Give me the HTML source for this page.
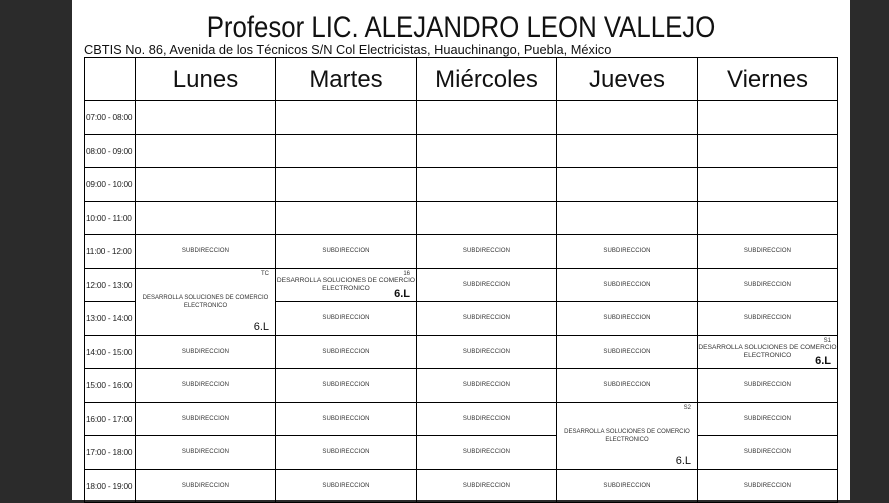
<!DOCTYPE html>
<html><head><meta charset="utf-8"><style>
body{margin:0;width:889px;height:500px;overflow:hidden;background:#2b2b2b;font-family:"Liberation Sans",Arial,sans-serif}
.page{position:absolute;left:72px;top:0;width:778px;height:500px;background:#fff}
.t{position:absolute;left:72px;width:778px;top:11px;text-align:center;font-size:30px;color:#111;transform:scaleX(0.86);white-space:nowrap}
.s{position:absolute;left:84px;top:42px;font-size:12.8px;color:#111;white-space:nowrap}
.g{position:absolute;left:84px;top:57px;display:grid;grid-template-columns:51px 140px 141px 140px 141px 140px;grid-template-rows:43px repeat(12,33.5px);border-left:1.5px solid #000;border-top:1.5px solid #000}
.g>div{border-right:1.5px solid #000;border-bottom:1.5px solid #000;position:relative;box-sizing:border-box;display:flex;align-items:center;justify-content:center;text-align:center}
.h{font-size:24px;color:#111;padding-top:2px}
.tm{font-size:8.3px;color:#222;justify-content:flex-start!important;padding-left:1px;white-space:nowrap;letter-spacing:-0.2px}
.sb{font-size:6px;color:#333;letter-spacing:.1px}
.d{display:block!important}
.d .n{position:absolute;right:6px;top:2px;font-size:6px;color:#333}
.d .x{position:absolute;left:-10px;right:-10px;font-size:6.6px;color:#333;line-height:8px;white-space:nowrap}
.d .l{position:absolute;right:6px;font-size:11px;color:#111;font-weight:bold}
</style></head><body>
<div class="page"></div>
<div class="t">Profesor LIC. ALEJANDRO LEON VALLEJO</div>
<div class="s">CBTIS No. 86, Avenida de los Técnicos S/N Col Electricistas, Huauchinango, Puebla, México</div>
<div class="g">
<div></div><div class="h">Lunes</div><div class="h">Martes</div><div class="h">Miércoles</div><div class="h">Jueves</div><div class="h">Viernes</div>
<div class="tm">07:00 - 08:00</div><div></div><div></div><div></div><div></div><div></div>
<div class="tm">08:00 - 09:00</div><div></div><div></div><div></div><div></div><div></div>
<div class="tm">09:00 - 10:00</div><div></div><div></div><div></div><div></div><div></div>
<div class="tm">10:00 - 11:00</div><div></div><div></div><div></div><div></div><div></div>
<div class="tm">11:00 - 12:00</div><div class="sb">SUBDIRECCION</div><div class="sb">SUBDIRECCION</div><div class="sb">SUBDIRECCION</div><div class="sb">SUBDIRECCION</div><div class="sb">SUBDIRECCION</div>
<div class="tm">12:00 - 13:00</div>
<div class="d" style="grid-row:span 2"><span class="n">TC</span><span class="x" style="top:25px;font-size:6px">DESARROLLA SOLUCIONES DE COMERCIO<br>ELECTRONICO</span><span class="l" style="bottom:2px;font-weight:normal">6.L</span></div>
<div class="d"><span class="n">16</span><span class="x" style="top:8px">DESARROLLA SOLUCIONES DE COMERCIO<br>ELECTRONICO</span><span class="l" style="bottom:1px">6.L</span></div>
<div class="sb">SUBDIRECCION</div><div class="sb">SUBDIRECCION</div><div class="sb">SUBDIRECCION</div>
<div class="tm">13:00 - 14:00</div><div class="sb">SUBDIRECCION</div><div class="sb">SUBDIRECCION</div><div class="sb">SUBDIRECCION</div><div class="sb">SUBDIRECCION</div>
<div class="tm">14:00 - 15:00</div><div class="sb">SUBDIRECCION</div><div class="sb">SUBDIRECCION</div><div class="sb">SUBDIRECCION</div><div class="sb">SUBDIRECCION</div>
<div class="d"><span class="n">S1</span><span class="x" style="top:8px">DESARROLLA SOLUCIONES DE COMERCIO<br>ELECTRONICO</span><span class="l" style="bottom:1px">6.L</span></div>
<div class="tm">15:00 - 16:00</div><div class="sb">SUBDIRECCION</div><div class="sb">SUBDIRECCION</div><div class="sb">SUBDIRECCION</div><div class="sb">SUBDIRECCION</div><div class="sb">SUBDIRECCION</div>
<div class="tm">16:00 - 17:00</div><div class="sb">SUBDIRECCION</div><div class="sb">SUBDIRECCION</div><div class="sb">SUBDIRECCION</div>
<div class="d" style="grid-row:span 2"><span class="n">S2</span><span class="x" style="top:25px;font-size:6px">DESARROLLA SOLUCIONES DE COMERCIO<br>ELECTRONICO</span><span class="l" style="bottom:2px;font-weight:normal">6.L</span></div>
<div class="sb">SUBDIRECCION</div>
<div class="tm">17:00 - 18:00</div><div class="sb">SUBDIRECCION</div><div class="sb">SUBDIRECCION</div><div class="sb">SUBDIRECCION</div><div class="sb">SUBDIRECCION</div>
<div class="tm">18:00 - 19:00</div><div class="sb">SUBDIRECCION</div><div class="sb">SUBDIRECCION</div><div class="sb">SUBDIRECCION</div><div class="sb">SUBDIRECCION</div><div class="sb">SUBDIRECCION</div>
</div>
</body></html>
